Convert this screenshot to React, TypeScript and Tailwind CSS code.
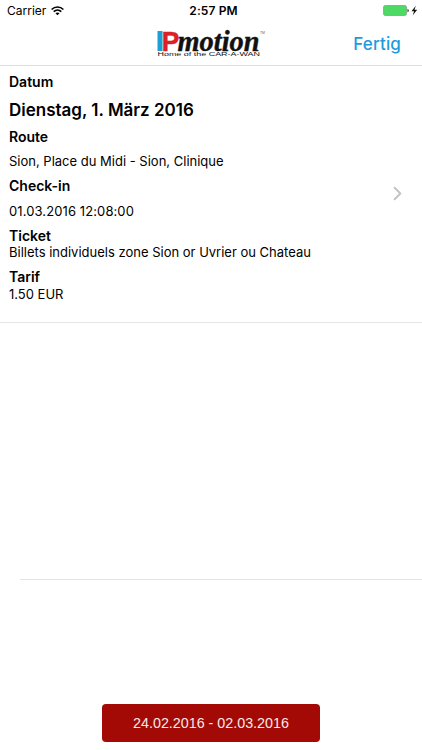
import { ChevronRight } from 'lucide-react'

interface Field {
  label: string
  value: string
  labelClass: string
  valueClass: string
}

const fields: Field[] = [
  {
    label: 'Datum',
    value: 'Dienstag, 1. März 2016',
    labelClass: 'h-[26px] leading-[32px]',
    valueClass: 'h-[33px] text-[17px] leading-[37px] font-semibold',
  },
  {
    label: 'Route',
    value: 'Sion, Place du Midi - Sion, Clinique',
    labelClass: 'h-[24px] leading-[23px]',
    valueClass: 'h-[25px] text-[13px] leading-[25px]',
  },
  {
    label: 'Check-in',
    value: '01.03.2016 12:08:00',
    labelClass: 'h-[24px] leading-[24px]',
    valueClass: 'h-[26px] text-[13px] leading-[26px] tracking-[0.1px]',
  },
  {
    label: 'Ticket',
    value: 'Billets individuels zone Sion or Uvrier ou Chateau',
    labelClass: 'h-[20px] leading-[24px]',
    valueClass: 'h-[19px] text-[13px] leading-[17px]',
  },
  {
    label: 'Tarif',
    value: '1.50 EUR',
    labelClass: 'h-[22px] leading-[27px]',
    valueClass: 'h-[37px] text-[13px] leading-[18px]',
  },
]

const WifiIcon = () => (
  <svg width="13" height="10" viewBox="0 0 13 10" fill="none" stroke="#000" strokeWidth="1.6">
    <path d="M0.6 3.5C3.9 0.2 9.1 0.2 12.4 3.5" />
    <path d="M2.7 5.6C4.9 3.5 8.1 3.5 10.3 5.6" />
    <path d="M6.5 9.3L4.5 7.2C5.6 6.2 7.4 6.2 8.5 7.2Z" fill="#000" stroke="none" />
  </svg>
)

const BatteryIcon = () => (
  <svg width="36" height="12" viewBox="0 0 36 12">
    <rect x="0.5" y="0.5" width="23" height="10" rx="1.8" fill="#4cd964" stroke="#7fa587" strokeWidth="0.8" />
    <path d="M24.5 3.7C26.2 4.2 26.2 6.8 24.5 7.3Z" fill="#222" />
    <path d="M32.8 0.8L28.5 6.3H31.1L29.6 10.4L34.2 4.7H31.5Z" fill="#111" />
  </svg>
)

const Logo = () => (
  <svg width="111" height="38" viewBox="0 0 111 38">
    <rect x="1.5" y="7" width="5" height="20" fill="#1b9fd6" />
    <text x="5.7" y="27" textLength="17.5" lengthAdjust="spacingAndGlyphs" fill="#dc2027" stroke="#dc2027" strokeWidth="0.5" className="font-['Liberation_Sans'] text-[28.5px] font-bold">P</text>
    <text x="21.5" y="27" textLength="82" lengthAdjust="spacingAndGlyphs" fill="#111" stroke="#111" strokeWidth="0.4" className="font-['Liberation_Serif'] text-[29px] font-bold italic">motion</text>
    <text x="104" y="10" textLength="5" lengthAdjust="spacingAndGlyphs" fill="#666" className="font-['Liberation_Sans'] text-[4px]">TM</text>
    <text x="1.5" y="32" textLength="102.5" lengthAdjust="spacingAndGlyphs" fill="#111" className="font-['Liberation_Sans'] text-[5px]">Home of the CAR-A-WAN</text>
  </svg>
)

const Header = () => (
  <header className="h-[66px] border-b border-[#dedede]">
    <div className="grid h-[22px] grid-cols-3 items-center text-[12px]">
      <div className="flex items-center gap-[5px] pl-[7px]">
        <span>Carrier</span>
        <WifiIcon />
      </div>
      <span className="pl-[5px] text-center font-semibold tracking-[0.1px]">2:57 PM</span>
      <div className="flex justify-end pr-[3px]">
        <BatteryIcon />
      </div>
    </div>
    <div className="flex h-[43px] justify-end pr-[21px]">
      <div className="mr-[86px] pt-[2px]">
        <Logo />
      </div>
      <button className="text-[17px] leading-[42px] font-medium tracking-[0.15px] text-[#1e9bdc]">Fertig</button>
    </div>
  </header>
)

const App = () => {
  return (
    <div className="flex h-[750px] w-[422px] flex-col overflow-hidden bg-white font-[Inter,sans-serif] text-black">
      <Header />
      <section className="flex h-[257px] items-center justify-between border-b border-[#e4e4e4] pr-[13px]">
        <dl className="h-full pl-[9px] whitespace-nowrap">
          {fields.map((field) => (
            <div key={field.label}>
              <dt className={`text-[14px] font-semibold ${field.labelClass}`}>{field.label}</dt>
              <dd className={field.valueClass}>{field.value}</dd>
            </div>
          ))}
        </dl>
        <ChevronRight size={23} strokeWidth={2} className="mb-[2px] text-[#c2c2c7]" />
      </section>
      <div className="ml-5 h-[257px] border-b border-[#e4e4e4]" />
      <footer className="flex flex-1 justify-center pt-[124px]">
        <button className="h-[38px] w-[218px] rounded-[4px] bg-[#a30a05] pt-[2px] font-['Liberation_Sans',sans-serif] text-[14.3px] text-[#f8e8e8]">
          24.02.2016 - 02.03.2016
        </button>
      </footer>
    </div>
  )
}

export default App
